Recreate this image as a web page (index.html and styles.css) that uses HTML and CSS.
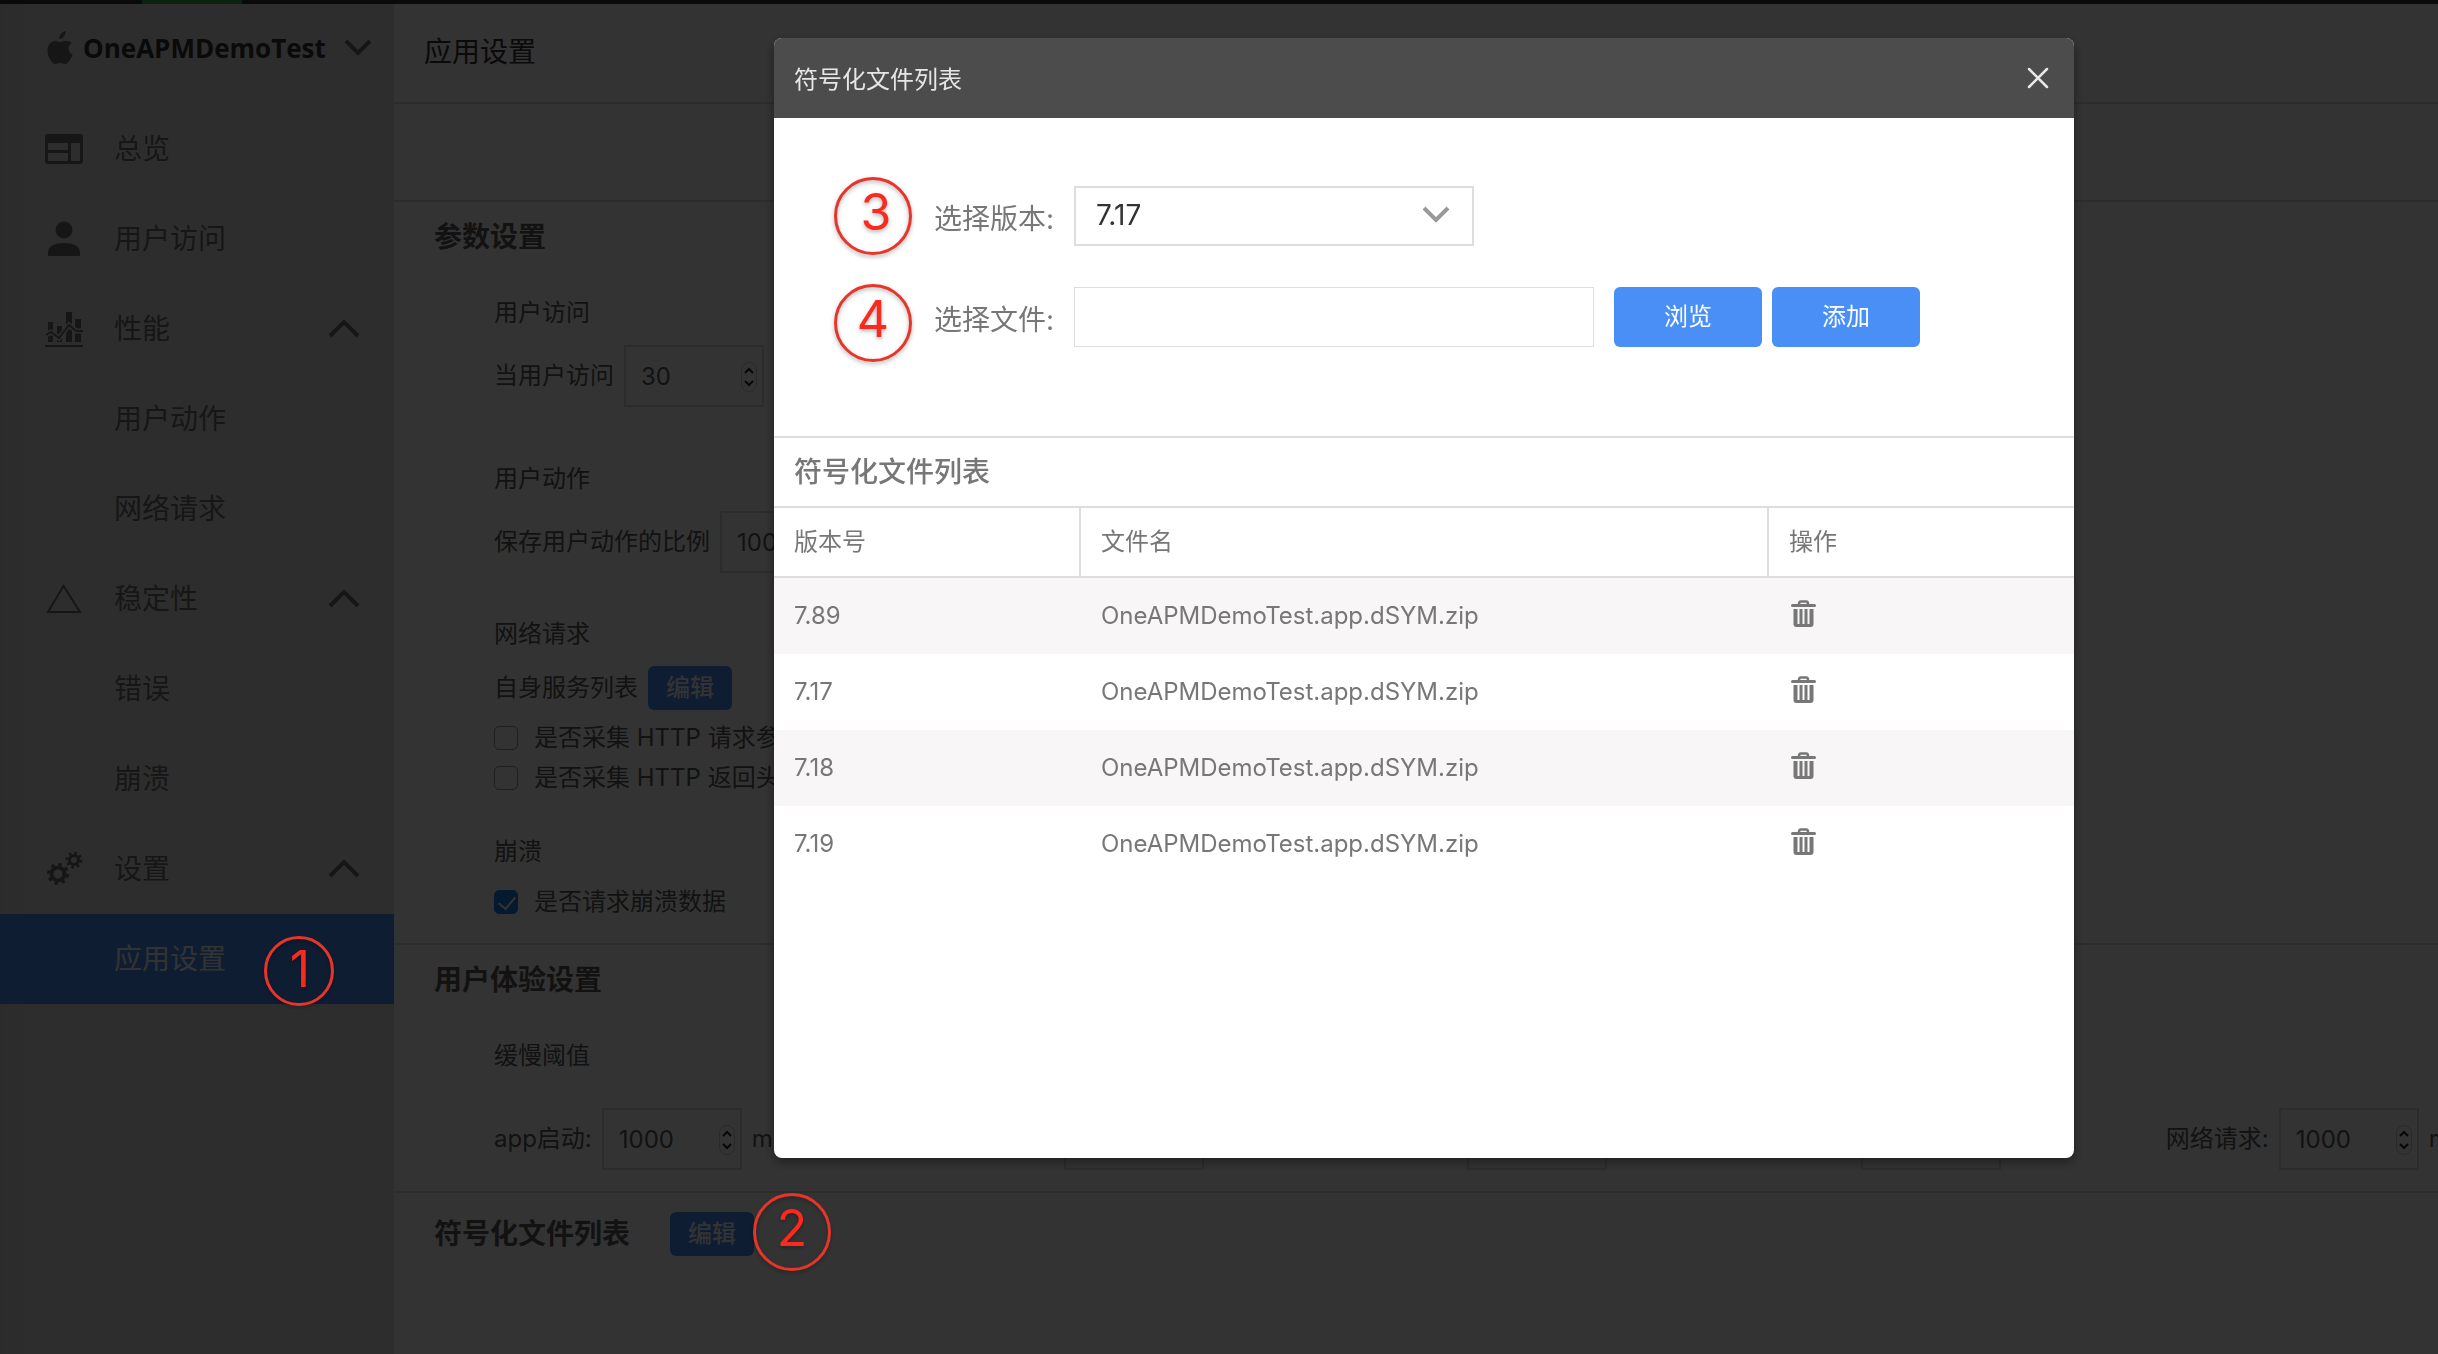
FILE: index.html
```html
<!DOCTYPE html>
<html lang="zh-CN">
<head>
	<meta charset="utf-8">
	<meta name="viewport" content="width=device-width, initial-scale=1">
	<title>应用设置</title>
	<link rel="stylesheet" href="styles.css">
</head>
<body>
	<svg class="defs" width="0" height="0">
		<symbol id="up" viewBox="0 0 32 20"><path d="M2 17L16 3l14 14" fill="none" stroke="currentColor" stroke-width="4"/></symbol>
		<symbol id="down" viewBox="0 0 28 18"><path d="M2 2l12 12L26 2" fill="none" stroke="currentColor" stroke-width="4"/></symbol>
		<symbol id="spin" viewBox="0 0 16 30">
			<rect x="0.5" y="0.5" width="15" height="29" rx="7.5" fill="none" stroke="#ccc"/>
			<path d="M4 11l4-4 4 4M4 19l4 4 4-4" fill="none" stroke="#222" stroke-width="2"/>
		</symbol>
		<symbol id="trash" viewBox="0 0 28 28">
			<path d="M10 4q0-2.500 2-2.500h5q2 0 2 2.500" fill="none" stroke="currentColor" stroke-width="2.500"/>
			<path d="M3.500 5.500h22" stroke="currentColor" stroke-width="3" stroke-linecap="round"/>
			<path fill="currentColor" fill-rule="evenodd" d="M4.500 9h20v15q0 3-3 3h-14q-3 0-3-3zM8.500 9v15h2V9zM13.500 9v15h2V9zM18.500 9v15h2V9z"/>
		</symbol>
	</svg>

	<div class="topbar"><span></span></div>
	<div class="page">
		<nav class="sidebar">
			<a class="app" href="#">
				<svg width="26" height="34" viewBox="0 0 26 34"><path fill="currentColor" d="M18.500 0c.3 2.500-.6 4.500-2 6-1.300 1.500-2.700 2.100-4.200 2-.2-2.200.7-4.200 2-5.600C15.600 1 17.200.2 18.500 0zM24.800 12c-2.200 1.400-3.300 3.300-3.200 5.600.1 2.700 1.400 4.700 4 5.900-.8 2.500-2 4.700-3.500 6.700-1.300 1.900-2.700 2.900-4.200 2.900-1.700 0-2.700-1-4.700-1s-3.200 1-4.600 1c-1.700 0-3.200-1.200-4.700-3.400C1.600 26.500.5 23.200.5 19.800c0-5.800 3.400-9.900 7.800-9.900 2 0 3.500 1.200 4.900 1.200 1.300 0 3.100-1.300 5.500-1.300 2.500 0 4.600.9 6.100 2.200z"/></svg>
				<b>OneAPMDemoTest</b>
				<svg width="28" height="18"><use href="#down"/></svg>
			</a>
			<a href="#">
				<svg class="ico" width="38" height="30" viewBox="0 0 38 30"><path fill="currentColor" fill-rule="evenodd" d="M3 0h32q3 0 3 3v24q0 3-3 3H3q-3 0-3-3V3Q0 0 3 0zM3 9v7h20V9zM3 19v8h20v-8zM26 9v18h9V9z"/></svg>
				总览
			</a>
			<a href="#">
				<svg class="ico" width="38" height="36" viewBox="0 0 38 36"><circle cx="19" cy="9" r="8.500" fill="currentColor"/><path fill="currentColor" d="M3 35v-4c0-6 7-9 16-9s16 3 16 9v4z"/></svg>
				用户访问
			</a>
			<a href="#">
				<svg class="ico" width="38" height="38" viewBox="0 0 38 38">
					<path fill="currentColor" d="M3 12h5v20H3zM12 16h5v16h-5zM21 2h6v30h-6zM30 9h6v23h-6z"/>
					<path d="M1 25l5-3 8 6L24 15l7 6h7" fill="none" stroke="#e2e2e2" stroke-width="5"/>
					<path d="M1 25l5-3 8 6L24 15l7 6h7M0 36h38" fill="none" stroke="currentColor" stroke-width="2"/>
				</svg>
				性能
				<svg class="fold" width="32" height="20"><use href="#up"/></svg>
			</a>
			<a href="#">用户动作</a>
			<a href="#">网络请求</a>
			<a href="#">
				<svg class="ico" width="38" height="34" viewBox="0 0 38 34"><path d="M3 30L18.500 4 35 30z" fill="none" stroke="currentColor" stroke-width="2"/></svg>
				稳定性
				<svg class="fold" width="32" height="20"><use href="#up"/></svg>
			</a>
			<a href="#">错误</a>
			<a href="#">崩溃</a>
			<a href="#">
				<svg class="ico" width="38" height="36" viewBox="0 0 38 36" fill="none" stroke="currentColor">
					<circle cx="13" cy="23" r="6.500" stroke-width="4"/>
					<circle cx="13" cy="23" r="9.500" stroke-width="3" stroke-dasharray="3.500 3.960"/>
					<circle cx="29" cy="9" r="4.500" stroke-width="3"/>
					<circle cx="29" cy="9" r="7" stroke-width="3" stroke-dasharray="2.500 3"/>
				</svg>
				设置
				<svg class="fold" width="32" height="20"><use href="#up"/></svg>
			</a>
			<a class="active" href="#">应用设置</a>
		</nav>

		<main>
			<header><h1>应用设置</h1></header>
			<div class="toolbar"></div>

			<section>
				<h2>参数设置</h2>
				<div class="group">
					<h3>用户访问</h3>
					<div class="field">
						<label for="visit">当用户访问</label>
						<span class="number"><input id="visit" type="number" value="30"><svg width="16" height="30"><use href="#spin"/></svg></span>
					</div>
				</div>
				<div class="group">
					<h3>用户动作</h3>
					<div class="field">
						<label for="ratio">保存用户动作的比例</label>
						<span class="number"><input id="ratio" type="number" value="100"><svg width="16" height="30"><use href="#spin"/></svg></span>
					</div>
				</div>
				<div class="group network">
					<h3>网络请求</h3>
					<div class="field short"><span>自身服务列表</span><button class="edit">编辑</button></div>
					<label class="check"><input type="checkbox">是否采集 HTTP 请求参数</label>
					<label class="check"><input type="checkbox">是否采集 HTTP 返回头</label>
				</div>
				<div class="group crash">
					<h3>崩溃</h3>
					<label class="check"><input type="checkbox" checked>是否请求崩溃数据</label>
				</div>
			</section>

			<section>
				<h2>用户体验设置</h2>
				<div class="group">
					<h3>缓慢阈值</h3>
					<div class="limits">
						<div class="field">
							<label for="l1">app启动:</label>
							<span class="number"><input id="l1" type="number" value="1000"><svg width="16" height="30"><use href="#spin"/></svg></span>ms
						</div>
						<div class="field">
							<label for="l2">H5 页面加载:</label>
							<span class="number"><input id="l2" type="number" value="1000"><svg width="16" height="30"><use href="#spin"/></svg></span>ms
						</div>
						<div class="field">
							<label for="l3">数据库操作:</label>
							<span class="number"><input id="l3" type="number" value="1000"><svg width="16" height="30"><use href="#spin"/></svg></span>ms
						</div>
						<div class="field">
							<label for="l4">用户动作:</label>
							<span class="number"><input id="l4" type="number" value="1000"><svg width="16" height="30"><use href="#spin"/></svg></span>ms
						</div>
						<div class="field">
							<label for="l5">网络请求:</label>
							<span class="number"><input id="l5" type="number" value="1000"><svg width="16" height="30"><use href="#spin"/></svg></span>ms
						</div>
					</div>
				</div>
			</section>

			<section class="symbols">
				<h2>符号化文件列表</h2>
				<button class="edit">编辑</button>
			</section>
		</main>
	</div>

	<div class="overlay">
		<div class="modal" role="dialog" aria-labelledby="modal-title">
			<div class="modal-head">
				<span id="modal-title">符号化文件列表</span>
				<button class="close" aria-label="关闭"><svg width="22" height="22" viewBox="0 0 22 22"><path d="M2 2l18 18M20 2L2 20" stroke="currentColor" stroke-width="2.500" stroke-linecap="round"/></svg></button>
			</div>
			<form>
				<div class="row">
					<i class="mark">3</i>
					<label for="version">选择版本:</label>
					<span class="select">
						<select id="version"><option>7.17</option><option>7.18</option><option>7.19</option><option>7.89</option></select>
						<svg width="28" height="18"><use href="#down"/></svg>
					</span>
				</div>
				<div class="row">
					<i class="mark four">4</i>
					<label for="file">选择文件:</label>
					<input id="file" type="text">
					<button type="button">浏览</button>
					<button type="button">添加</button>
				</div>
			</form>
			<h4>符号化文件列表</h4>
			<table>
				<thead>
					<tr><th class="ver">版本号</th><th class="name">文件名</th><th>操作</th></tr>
				</thead>
				<tbody>
					<tr><td>7.89</td><td>OneAPMDemoTest.app.dSYM.zip</td><td><button aria-label="删除"><svg width="28" height="28"><use href="#trash"/></svg></button></td></tr>
					<tr><td>7.17</td><td>OneAPMDemoTest.app.dSYM.zip</td><td><button aria-label="删除"><svg width="28" height="28"><use href="#trash"/></svg></button></td></tr>
					<tr><td>7.18</td><td>OneAPMDemoTest.app.dSYM.zip</td><td><button aria-label="删除"><svg width="28" height="28"><use href="#trash"/></svg></button></td></tr>
					<tr><td>7.19</td><td>OneAPMDemoTest.app.dSYM.zip</td><td><button aria-label="删除"><svg width="28" height="28"><use href="#trash"/></svg></button></td></tr>
				</tbody>
			</table>
		</div>
		<i class="mark one">1</i>
		<i class="mark two">2</i>
	</div>
</body>
</html>
```
FILE: styles.css
```css
*{
	box-sizing: border-box;
}

body{
	margin: 0px;
	min-height: 100vh;
	display: flex;
	flex-direction: column;
	overflow: hidden;
	background: #fff;
	color: #5a5a5a;
	font-family: Inter, "Noto Sans CJK SC", sans-serif;
	font-size: 24px;
	line-height: 36px;
}

h1, h2, h3, h4{
	margin: 0px;
	font-size: 28px;
	line-height: 40px;
}

button, input, select{
	font: inherit;
	color: inherit;
}

button{
	border: 0px;
	padding: 0px;
	background: none;
}

svg{
	display: block;
	flex: none;
}

.defs{
	position: absolute;
}

.topbar{
	height: 4px;
	padding-left: 142px;
	background: #333;
}

.topbar span{
	display: block;
	width: 100px;
	height: 4px;
	background: #32b040;
}

.page{
	flex: 1;
	display: flex;
}

/* sidebar */

.sidebar{
	width: 394px;
	flex: none;
	background: #e2e2e2;
	background: linear-gradient(to right, #d8d8d8, #e2e2e2 44px);
}

.sidebar a{
	display: flex;
	align-items: center;
	height: 90px;
	padding: 0px 34px 0px 114px;
	color: #707070;
	font-size: 28px;
	text-decoration: none;
}

.sidebar .ico{
	margin-left: -69px;
	margin-right: 31px;
}

.sidebar .fold{
	margin-left: auto;
}

.sidebar a.app{
	height: 100px;
	padding: 0px 22px 12px 47px;
	font-size: 26px;
	gap: 10px;
}

.app b{
	flex: 1;
	color: #333;
	font-family: "Open Sans", sans-serif;
	font-weight: 700;
}

.sidebar a.active{
	background: #498ff6;
	color: #fff;
}

/* settings */

main{
	flex: 1;
	min-width: 0px;
	overflow: hidden;
}

header{
	height: 100px;
	padding: 28px 30px;
	border-bottom: 2px solid #ddd;
}

h1{
	color: #333;
	font-weight: 400;
}

.toolbar{
	height: 98px;
	border-bottom: 2px solid #ddd;
}

section{
	padding: 15px 0px 21px 40px;
	border-bottom: 2px solid #ddd;
}

h3{
	font-size: 24px;
	line-height: 36px;
	font-weight: 400;
}

.group{
	margin: 38px 0px 0px 60px;
}

.group + .group{
	margin-top: 54px;
}

.group + .network{
	margin-top: 43px;
}

.group + .crash{
	margin-top: 36px;
}

.field{
	display: flex;
	align-items: center;
	gap: 10px;
	height: 62px;
	margin-top: 14px;
}

.field.short{
	height: 44px;
	margin-bottom: 8px;
}

.number{
	position: relative;
}

.number input{
	display: block;
	width: 140px;
	height: 62px;
	padding: 0px 15px;
	border: 2px solid #ddd;
	background: none;
	appearance: textfield;
}

.number input::-webkit-inner-spin-button{
	appearance: none;
}

.number svg{
	position: absolute;
	top: 17px;
	right: 7px;
}

.edit{
	width: 84px;
	height: 44px;
	border-radius: 6px;
	background: #498ff6;
	color: #fff;
	font-weight: 500;
}

.check{
	display: flex;
	align-items: center;
	gap: 16px;
	height: 40px;
}

.crash .check{
	margin-top: 12px;
}

.check input{
	appearance: none;
	width: 24px;
	height: 24px;
	margin: 0px;
	border: 1px solid #999;
	border-radius: 5px;
}

.check input:checked{
	border-color: #2080e8;
	background: #2080e8;
}

.check input:checked:after{
	content: "";
	display: block;
	width: 8px;
	height: 14px;
	margin: 2px 0px 0px 7px;
	border: solid #fff;
	border-width: 0px 2px 2px 0px;
	transform: rotate(40deg);
}

.limits{
	display: flex;
	margin-top: 34px;
}

.limits .field{
	flex: 0 0 21.5%;
	margin: 0px;
}

.symbols{
	display: flex;
	align-items: center;
	gap: 40px;
	padding-top: 19px;
	border: 0px;
}

/* modal */

.overlay{
	position: fixed;
	inset: 0px;
	display: flex;
	justify-content: center;
	align-items: flex-start;
	padding: 38px 0px 0px 410px;
	background: rgba(0,0,0,0.8);
}

.modal{
	width: 1300px;
	min-height: 1120px;
	border-radius: 8px;
	overflow: hidden;
	background: #fff;
	color: #777;
	box-shadow: 0px 4px 12px rgba(0,0,0,0.4);
}

.modal-head{
	display: flex;
	align-items: center;
	justify-content: space-between;
	height: 80px;
	padding: 0px 25px 0px 20px;
	background: #4c4c4c;
	color: #e6e6e6;
}

.modal-head span{
	padding-top: 3px;
}

form{
	display: flex;
	flex-direction: column;
	gap: 41px;
	padding: 68px 20px 89px 160px;
}

.row{
	position: relative;
	display: flex;
	align-items: center;
	height: 60px;
}

.row label{
	width: 140px;
	padding-top: 5px;
	font-size: 28px;
}

.select{
	position: relative;
}

.select select{
	display: block;
	width: 400px;
	height: 60px;
	padding: 0px 20px 2px;
	border: 2px solid #ddd;
	background: #fff;
	color: #333;
	font-size: 28px;
	appearance: none;
}

.select svg{
	position: absolute;
	top: 20px;
	right: 24px;
	color: #999;
}

.row input{
	width: 520px;
	height: 60px;
	padding: 0px 20px;
	border: 1px solid #ddd;
	margin-right: 20px;
}

.row button{
	width: 148px;
	height: 60px;
	margin-right: 10px;
	border-radius: 6px;
	background: #498ff6;
	color: #fff;
}

h4{
	padding: 14px 20px;
	border-top: 2px solid #ddd;
	font-weight: 500;
}

table{
	width: 100%;
	table-layout: fixed;
	border-collapse: separate;
	border-spacing: 0px;
}

th{
	height: 72px;
	padding: 0px 20px;
	border: solid #ddd;
	border-width: 2px 0px 2px 0px;
	font-weight: 400;
	text-align: left;
}

.ver{
	width: 307px;
	border-right-width: 2px;
}

.name{
	width: 688px;
	border-right-width: 2px;
}

td{
	height: 76px;
	padding: 0px 20px;
}

td button{
	display: block;
	padding-bottom: 4px;
}

tbody tr:nth-child(odd){
	background: #f8f6f7;
}

/* numbered steps */

.mark{
	position: absolute;
	top: -9px;
	left: -100px;
	width: 78px;
	height: 78px;
	padding-left: 6px;
	border: 3px solid #e8352a;
	border-radius: 50%;
	color: #fa2a1e;
	font-size: 50px;
	font-style: normal;
	line-height: 64px;
	text-align: center;
	filter: drop-shadow(0px 2px 2px rgba(0,0,0,0.3));
}

.mark.four{
	top: -3px;
	padding-left: 0px;
}

.mark.one{
	top: 936px;
	left: 264px;
	width: 70px;
	height: 70px;
	padding-left: 2px;
	line-height: 60px;
}

.mark.two{
	top: 1193px;
	left: 753px;
	padding-left: 0px;
}
```
